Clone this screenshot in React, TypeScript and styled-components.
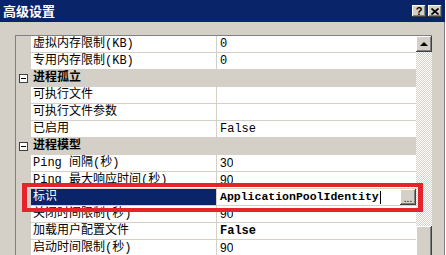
import React, { FC } from 'react'
import styled, { createGlobalStyle, css } from 'styled-components'

const GlobalStyle = createGlobalStyle`
  html, body {
    margin: 0;
    padding: 0;
    background: #d4d0c8;
    overflow: hidden;
  }
`

type Kind = 'mono' | 'sans' | 'monoBold' | 'edit'

interface Prop {
  name: string
  value?: string
  kind?: Kind
}

interface Section {
  title?: string
  props: Prop[]
}

const sections: Section[] = [
  {
    props: [
      { name: '虚拟内存限制(KB)', value: '0', kind: 'mono' },
      { name: '专用内存限制(KB)', value: '0', kind: 'mono' }
    ]
  },
  {
    title: '进程孤立',
    props: [
      { name: '可执行文件' },
      { name: '可执行文件参数' },
      { name: '已启用', value: 'False', kind: 'mono' }
    ]
  },
  {
    title: '进程模型',
    props: [
      { name: 'Ping 间隔(秒)', value: '30', kind: 'sans' },
      { name: 'Ping 最大响应时间(秒)', value: '90', kind: 'sans' },
      { name: '标识', value: 'ApplicationPoolIdentity', kind: 'edit' },
      { name: '关闭时间限制(秒)', value: '90', kind: 'sans' },
      { name: '加载用户配置文件', value: 'False', kind: 'monoBold' },
      { name: '启动时间限制(秒)', value: '90', kind: 'sans' }
    ]
  }
]

const bevel = css`
  background: #d4d0c8;
  box-shadow: inset -1px -1px #404040, inset 1px 1px #ffffff,
    inset -2px -2px #808080, inset 2px 2px #d4d0c8;
`

const CloseGlyph: FC = () => (
  <svg width="8" height="7" viewBox="0 0 8 7">
    <path d="M0.5 0.5 L7.5 6.5 M7.5 0.5 L0.5 6.5" stroke="#000" strokeWidth="1.6" />
  </svg>
)

const PropRow: FC<Prop> = ({ name, value, kind }) => {
  const selected = kind === 'edit'
  return (
    <Row>
      <Margin />
      <NameCell $selected={selected}>{name}</NameCell>
      <Divider />
      <ValueCell>
        {selected ? (
          <>
            <EditText>{value}</EditText>
            <Caret />
            <Spacer />
            <DotsButton>...</DotsButton>
          </>
        ) : (
          <ValueText $kind={kind}>{value}</ValueText>
        )}
      </ValueCell>
    </Row>
  )
}

const App: FC = () => {
  return (
    <Window>
      <GlobalStyle />
      <TitleBar>
        <Title>高级设置</Title>
        <TitleButtons>
          <TitleButton>?</TitleButton>
          <TitleButton>
            <CloseGlyph />
          </TitleButton>
        </TitleButtons>
      </TitleBar>
      <Body>
        <Grid>
          <List>
            {sections.map((s, i) => (
              <React.Fragment key={`sec-${i}`}>
                {s.title && (
                  <HeaderRow>
                    <Margin>
                      <Toggle>
                        <ToggleBar />
                      </Toggle>
                    </Margin>
                    <HeaderText>{s.title}</HeaderText>
                  </HeaderRow>
                )}
                {s.props.map(p => (
                  <PropRow key={p.name} {...p} />
                ))}
              </React.Fragment>
            ))}
          </List>
          <ScrollBar>
            <ScrollUp>
              <UpArrow />
            </ScrollUp>
            <Track />
            <Thumb />
          </ScrollBar>
        </Grid>
      </Body>
      <Highlight />
    </Window>
  )
}

const Window = styled.div`
  position: relative;
  width: 446px;
  height: 255px;
  display: flex;
  flex-direction: column;
  background: #d4d0c8;
  overflow: hidden;
  box-sizing: border-box;
  border-right: 1px solid #ffffff;
`

const TitleBar = styled.div`
  height: 22px;
  flex: none;
  display: flex;
  align-items: center;
  justify-content: space-between;
  background: #0a246a;
  padding: 0 3px 0 3px;
`

const Title = styled.span`
  color: #ffffff;
  font-family: 'Noto Sans CJK SC', sans-serif;
  font-weight: 700;
  font-size: 13px;
  line-height: 22px;
`

const TitleButtons = styled.div`
  display: flex;
  gap: 2px;
`

const TitleButton = styled.div`
  ${bevel};
  width: 14px;
  height: 12px;
  display: flex;
  align-items: center;
  justify-content: center;
  font-family: 'Liberation Sans', sans-serif;
  font-weight: 700;
  font-size: 11px;
  line-height: 12px;
  color: #000000;
`

const Body = styled.div`
  flex: 1;
  display: flex;
  padding: 13px 0 0 15px;
  border-right: 1px solid #808080;
`

const Grid = styled.div`
  display: flex;
  align-items: stretch;
  border-top: 1px solid #808080;
  border-left: 1px solid #808080;
`

const List = styled.div`
  width: 400px;
  display: flex;
  flex-direction: column;
`

const Row = styled.div`
  display: grid;
  grid-template-columns: 15px 185px 1px 199px;
  height: 17px;
  flex: none;
`

const Margin = styled.div`
  background: #d4d0c8;
  display: flex;
  align-items: center;
  justify-content: center;
`

const cellText = css`
  font-family: 'Liberation Mono', 'Noto Sans CJK SC', monospace;
  font-size: 12px;
  line-height: 16px;
  white-space: nowrap;
  overflow: hidden;
`

const NameCell = styled.div<{ $selected?: boolean }>`
  ${cellText};
  padding-left: 2px;
  background: ${p => (p.$selected ? '#0a246a' : '#ffffff')};
  color: ${p => (p.$selected ? '#ffffff' : '#000000')};
  border-bottom: 1px solid #d4d0c8;
`

const Divider = styled.div`
  background: #d4d0c8;
`

const ValueCell = styled.div`
  display: flex;
  align-items: center;
  background: #ffffff;
  border-bottom: 1px solid #d4d0c8;
  padding-left: 3px;
`

const ValueText = styled.span<{ $kind?: Kind }>`
  ${cellText};
  color: #000000;
  font-family: ${p =>
    p.$kind === 'sans' ? "'Liberation Sans', sans-serif" : "'Liberation Mono', monospace"};
  font-weight: ${p => (p.$kind === 'monoBold' ? 700 : 400)};
`

const EditText = styled.span`
  font-family: 'Liberation Mono', monospace;
  font-weight: 700;
  font-size: 11.5px;
  line-height: 16px;
  color: #000000;
`

const Caret = styled.span`
  width: 1px;
  height: 13px;
  margin-left: 1px;
  background: #000000;
`

const Spacer = styled.div`
  flex: 1;
`

const DotsButton = styled.div`
  ${bevel};
  width: 16px;
  height: 16px;
  display: flex;
  align-items: flex-end;
  justify-content: center;
  font-family: 'Liberation Sans', sans-serif;
  font-size: 10px;
  line-height: 12px;
  color: #000000;
`

const HeaderRow = styled.div`
  display: flex;
  height: 17px;
  flex: none;
  background: #d4d0c8;
  & > ${Margin} {
    width: 15px;
  }
`

const HeaderText = styled.span`
  ${cellText};
  font-weight: 700;
  padding-left: 2px;
  line-height: 17px;
  color: #000000;
`

const Toggle = styled.div`
  width: 9px;
  height: 9px;
  box-sizing: border-box;
  border: 1px solid #404040;
  background: #ffffff;
  display: flex;
  align-items: center;
  justify-content: center;
`

const ToggleBar = styled.div`
  width: 5px;
  height: 1px;
  background: #000000;
`

const ScrollBar = styled.div`
  width: 16px;
  display: flex;
  flex-direction: column;
`

const ScrollUp = styled.div`
  ${bevel};
  height: 16px;
  flex: none;
  display: flex;
  align-items: center;
  justify-content: center;
`

const UpArrow = styled.div`
  width: 0;
  height: 0;
  border-left: 4px solid transparent;
  border-right: 4px solid transparent;
  border-bottom: 4px solid #000000;
`

const Track = styled.div`
  flex: 1;
  background-color: #ffffff;
  background-image: conic-gradient(
    #d4d0c8 25%,
    #ffffff 0 50%,
    #d4d0c8 0 75%,
    #ffffff 0
  );
  background-size: 2px 2px;
`

const Thumb = styled.div`
  ${bevel};
  height: 31px;
  flex: none;
`

const Highlight = styled.div`
  position: absolute;
  left: 22px;
  top: 183px;
  width: 401px;
  height: 29px;
  box-sizing: border-box;
  border-style: solid;
  border-color: #e5232b;
  border-width: 4px 5px;
  pointer-events: none;
`

export default App
